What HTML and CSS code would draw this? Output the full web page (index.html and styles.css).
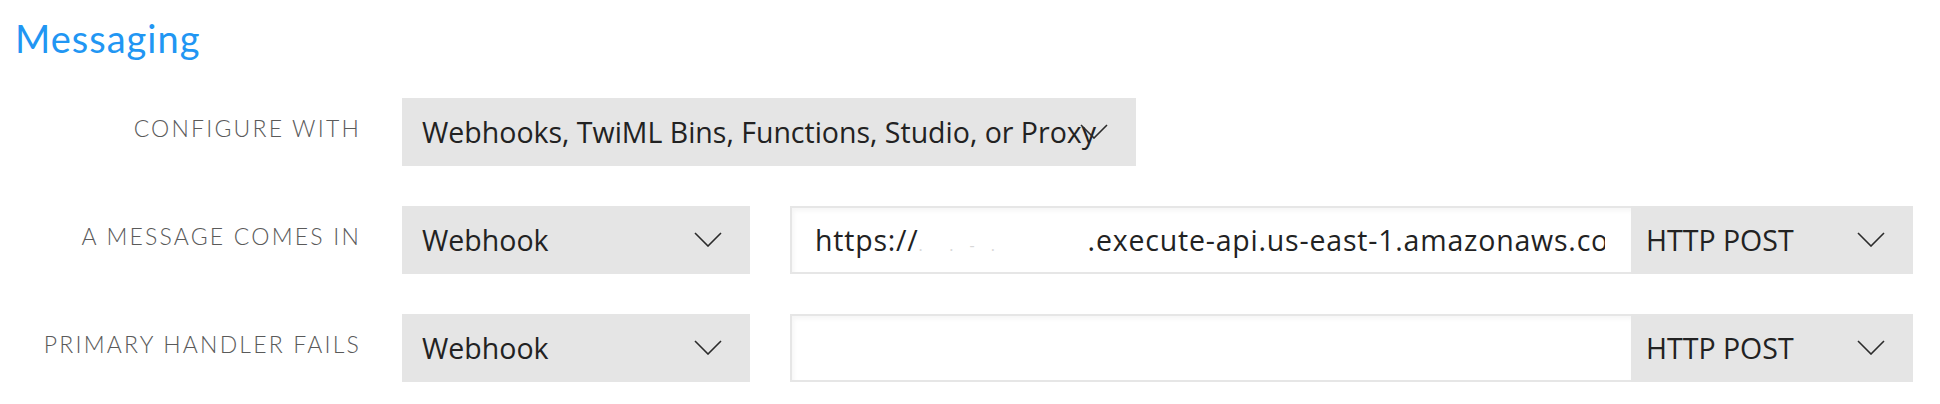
FILE: index.html
```html
<!DOCTYPE html>
<html lang="en">
<head>
<meta charset="utf-8">
<title>Messaging</title>
<link rel="stylesheet" href="styles.css">
</head>
<body>
<div class="page">
  <h2 class="title">Messaging</h2>
  <div class="form">
    <div class="label">CONFIGURE WITH</div>
    <div class="controls">
      <div class="select select-wide">
        <span class="select-text">Webhooks, TwiML Bins, Functions, Studio, or Proxy</span>
        <svg class="chev" width="28" height="15" viewBox="0 0 28 15"><polyline points="1,1 14,14 27,1" fill="none" stroke="#2b2b2b" stroke-width="1.6"/></svg>
      </div>
    </div>

    <div class="label">A MESSAGE COMES IN</div>
    <div class="controls">
      <div class="select select-type">
        <span class="select-text">Webhook</span>
        <svg class="chev" width="28" height="15" viewBox="0 0 28 15"><polyline points="1,1 14,14 27,1" fill="none" stroke="#2b2b2b" stroke-width="1.6"/></svg>
      </div>
      <div class="input">
        <span class="input-text">https://<span class="blur">. &nbsp;. - .</span>.execute-api.us-east-1.amazonaws.com/default/sms</span>
      </div>
      <div class="select select-method">
        <span class="select-text">HTTP POST</span>
        <svg class="chev" width="28" height="15" viewBox="0 0 28 15"><polyline points="1,1 14,14 27,1" fill="none" stroke="#2b2b2b" stroke-width="1.6"/></svg>
      </div>
    </div>

    <div class="label">PRIMARY HANDLER FAILS</div>
    <div class="controls">
      <div class="select select-type">
        <span class="select-text">Webhook</span>
        <svg class="chev" width="28" height="15" viewBox="0 0 28 15"><polyline points="1,1 14,14 27,1" fill="none" stroke="#2b2b2b" stroke-width="1.6"/></svg>
      </div>
      <div class="input">
        <span class="input-text"></span>
      </div>
      <div class="select select-method">
        <span class="select-text">HTTP POST</span>
        <svg class="chev" width="28" height="15" viewBox="0 0 28 15"><polyline points="1,1 14,14 27,1" fill="none" stroke="#2b2b2b" stroke-width="1.6"/></svg>
      </div>
    </div>
  </div>
</div>
</body>
</html>
```

FILE: styles.css
```css
html, body {
  margin: 0;
  padding: 0;
  background: #ffffff;
}

.page {
  width: 1940px;
  height: 404px;
  overflow: hidden;
}

.title {
  margin: 16px 0 38px 15px;
  font-family: Lato, "Open Sans", sans-serif;
  font-weight: 400;
  font-size: 38px;
  line-height: 44px;
  letter-spacing: 1px;
  color: #2196f3;
}

.form {
  display: grid;
  grid-template-columns: 361px 1fr;
  column-gap: 41px;
  row-gap: 40px;
  grid-auto-rows: 68px;
}

.label {
  text-align: right;
  padding-top: 15px;
  font-family: Lato, "Open Sans", sans-serif;
  font-weight: 300;
  font-size: 23px;
  line-height: 30px;
  letter-spacing: 2.2px;
  color: #5a5a5a;
}

.controls {
  display: flex;
  align-items: stretch;
}

.select {
  position: relative;
  display: flex;
  align-items: center;
  box-sizing: border-box;
  background: #e5e5e5;
  padding-left: 20px;
  overflow: hidden;
}

.select-wide { width: 734px; }
.select-type { width: 348px; margin-right: 40px; }
.select-method { width: 282px; padding-left: 15px; }

.select-text,
.input-text {
  font-family: "Open Sans", sans-serif;
  font-size: 28.5px;
  color: #222222;
  white-space: nowrap;
}

.chev {
  position: absolute;
  right: 28px;
  top: 26px;
}

.input {
  width: 841px;
  box-sizing: border-box;
  border: 2px solid #e6e6e6;
  border-right: none;
  background: #ffffff;
  box-shadow: inset 2px 3px 4px rgba(0, 0, 0, 0.04);
  padding: 0 26px 0 23px;
  display: flex;
  align-items: center;
}

.input-text {
  flex: 1;
  min-width: 0;
  overflow: hidden;
  letter-spacing: 0.8px;
}

.blur {
  display: inline-block;
  width: 169px;
  color: #d8d8d8;
  font-size: 16px;
  letter-spacing: 6px;
}
```
